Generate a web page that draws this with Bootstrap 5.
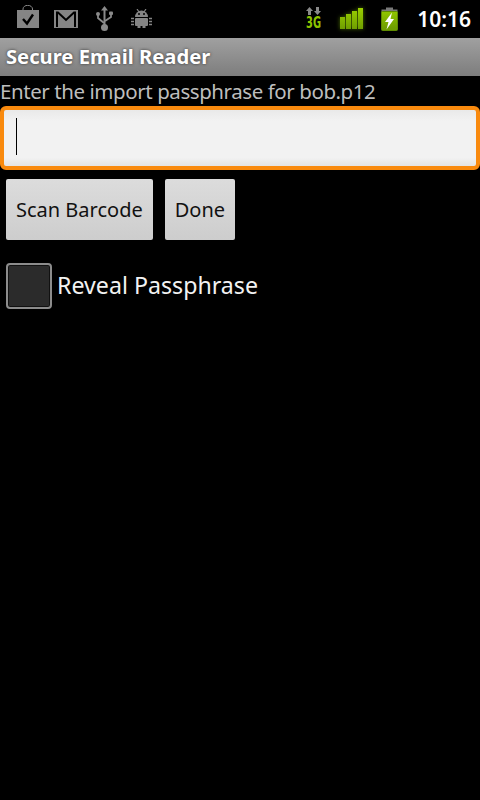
<!DOCTYPE html>
<html lang="en">
<head>
    <meta charset="UTF-8">
    <meta name="viewport" content="width=device-width, initial-scale=1.0">
    <link href="https://cdn.jsdelivr.net/npm/bootstrap@5.3.3/dist/css/bootstrap.min.css" rel="stylesheet">
    <title>Secure Email Reader</title>
    <style>
        html, body {
            background-color: #000;
            height: 800px;
            overflow: hidden;
        }

        body {
            font-family: "Noto Sans", "Open Sans", sans-serif;
        }

        .status-bar {
            height: 38px;
            padding-left: 16px;
            padding-right: 9px;
        }

        .status-right {
            margin-left: auto;
        }

        .ic-bag {
            margin-bottom: 5px;
        }

        .ic-gmail {
            margin-left: 15px;
        }

        .ic-usb {
            margin-left: 18px;
            margin-bottom: 1px;
        }

        .ic-droid {
            margin-left: 18px;
            margin-bottom: 2px;
        }

        .ic-3g {
            margin-bottom: 1px;
            overflow: visible;
        }

        .ic-signal {
            margin-left: 19px;
            margin-bottom: 1px;
            filter: drop-shadow(0 0 2px rgba(130, 190, 0, .55));
        }

        .ic-battery {
            margin-left: 18px;
        }

        .status-time {
            color: #fff;
            font-size: 21px;
            font-weight: 600;
            line-height: 38px;
            margin-left: 19px;
        }

        .title-bar {
            height: 38px;
            line-height: 37px;
            padding-left: 6px;
            color: #fff;
            font-size: 20.2px;
            font-weight: 700;
            background: linear-gradient(#a0a0a0, #7d7d7d);
            text-shadow: 0 0 3px #333;
            white-space: nowrap;
        }

        .prompt {
            color: #bdbdbd;
            font-size: 20.5px;
            letter-spacing: -.43px;
            line-height: 30px;
            height: 30px;
            white-space: nowrap;
        }

        .pass-box {
            height: 64px;
            border: 4px solid #f98a0e;
            border-radius: 6px;
            background: linear-gradient(#e9e9e9, #f2f2f2 20%, #f2f2f2 85%, #e4e4e4);
            padding: 8px 0 8px 12px;
        }

        .pass-caret {
            width: 1px;
            height: 37px;
            background: #000;
        }

        .btn-row {
            margin-top: 9px;
            padding-left: 6px;
            gap: 12px;
        }

        .droid-btn {
            height: 61px;
            border: 0;
            border-radius: 2px;
            padding: 0 10px;
            color: #111;
            font-size: 20px;
            background: linear-gradient(#dcdcdc, #cdcdcd);
            white-space: nowrap;
        }

        .reveal-row {
            margin-top: 23px;
            padding-left: 6px;
            gap: 5px;
        }

        .reveal-box {
            width: 46px;
            height: 46px;
            border: 2px solid #8c8c8c;
            border-radius: 4px;
            background: #2b2b2b;
            box-shadow: inset 0 0 0 1px #111;
        }

        .reveal-text {
            color: #f2f2f2;
            font-size: 23.2px;
            margin-bottom: 2px;
        }
    </style>
</head>
<body>
    <div class="status-bar d-flex align-items-center">
        <!-- market bag -->
        <svg class="ic-bag" width="23" height="23" viewBox="0 0 23 23">
            <path d="M7 6V4a4.500 3.500 0 0 1 9.500 0v2" fill="none" stroke="#8a8a8a" stroke-width="1"/>
            <rect x="1" y="5" width="22" height="18" fill="#858585"/>
            <path d="M7 14l4 4.500 6-9" fill="none" stroke="#000" stroke-width="2.400"/>
        </svg>
        <!-- gmail -->
        <svg class="ic-gmail" width="24" height="18" viewBox="0 0 24 18">
            <rect width="24" height="18" fill="#858585"/>
            <path d="M3 17V2.500h1L12 10l8-7.500h1V17" fill="none" stroke="#000" stroke-width="2"/>
        </svg>
        <!-- usb -->
        <svg class="ic-usb" width="17" height="25" viewBox="0 0 17 25">
            <path d="M8.500 0l3.500 4.500H9.500V19h-2V4.500H5z" fill="#8a8a8a"/>
            <circle cx="8.500" cy="21.500" r="3.500" fill="#8a8a8a"/>
            <path d="M2 9v3l6 5M15 8v3l-6 4" fill="none" stroke="#8a8a8a" stroke-width="1.800"/>
            <circle cx="2" cy="8" r="2" fill="#8a8a8a"/>
            <rect x="13" y="5.500" width="4" height="3.500" rx="1" fill="#8a8a8a"/>
        </svg>
        <!-- android -->
        <svg class="ic-droid" width="21" height="19" viewBox="0 0 21 19">
            <path d="M6 0l2 3M15 0l-2 3" stroke="#858585" stroke-width="1.200"/>
            <path d="M4 8a6.500 6.500 0 0 1 13 0z" fill="#858585"/>
            <circle cx="8" cy="5" r="1" fill="#000"/>
            <circle cx="13" cy="5" r="1" fill="#000"/>
            <rect x="4" y="9" width="13" height="8" rx="1" fill="#858585"/>
            <rect x="6.500" y="17" width="3" height="2" fill="#858585"/>
            <rect x="11.500" y="17" width="3" height="2" fill="#858585"/>
            <path d="M0 9.500h3M0 12.500h3M0 15.500h3M18 9.500h3M18 12.500h3M18 15.500h3" stroke="#858585" stroke-width="1.600"/>
        </svg>

        <div class="status-right d-flex align-items-center">
            <!-- 3G -->
            <svg class="ic-3g" width="15" height="24" viewBox="0 0 15 24">
                <path d="M3.500 0L7 4H5v4H2V4H0zM11.500 8L8 4h2V0h3v4h2z" fill="#8a8a8a"/>
                <text x="0" y="20.500" font-family="DejaVu Sans" font-weight="700" font-size="15" textLength="15" lengthAdjust="spacingAndGlyphs" fill="#8fc400">3G</text>
            </svg>
            <!-- signal -->
            <svg class="ic-signal" width="23" height="21" viewBox="0 0 23 21">
                <defs>
                    <linearGradient id="barGreen" gradientUnits="userSpaceOnUse" x1="0" y1="0" x2="0" y2="21">
                        <stop offset="0" stop-color="#9ad000"/>
                        <stop offset="1" stop-color="#6f9e00"/>
                    </linearGradient>
                </defs>
                <rect x="0" y="9" width="5" height="12" fill="url(#barGreen)"/>
                <rect x="6" y="6" width="5" height="15" fill="url(#barGreen)"/>
                <rect x="12" y="3" width="5" height="18" fill="url(#barGreen)"/>
                <rect x="18" y="0" width="5" height="21" fill="url(#barGreen)"/>
            </svg>
            <!-- battery -->
            <svg class="ic-battery" width="17" height="24" viewBox="0 0 17 24">
                <path d="M5 2.500V.5h7v2h4.500V6H.5V2.500z" fill="#7a7a7a"/>
                <rect x=".5" y="4.500" width="16" height="19" rx="1" fill="url(#barGreen)" stroke="#5f8a00"/>
                <path d="M11 5.500L4 15h3.500L5.500 22.500 13 12H9.500z" fill="#fff"/>
            </svg>
            <span class="status-time">10:16</span>
        </div>
    </div>

    <div class="title-bar">Secure Email Reader</div>

    <div class="prompt">Enter the import passphrase for bob.p12</div>

    <div class="pass-box">
        <div class="pass-caret"></div>
    </div>

    <div class="btn-row d-flex">
        <button type="button" class="droid-btn">Scan Barcode</button>
        <button type="button" class="droid-btn">Done</button>
    </div>

    <div class="reveal-row d-flex align-items-center">
        <div class="reveal-box"></div>
        <span class="reveal-text">Reveal Passphrase</span>
    </div>

    <script src="https://cdn.jsdelivr.net/npm/bootstrap@5.3.3/dist/js/bootstrap.bundle.min.js"></script>
</body>
</html>
